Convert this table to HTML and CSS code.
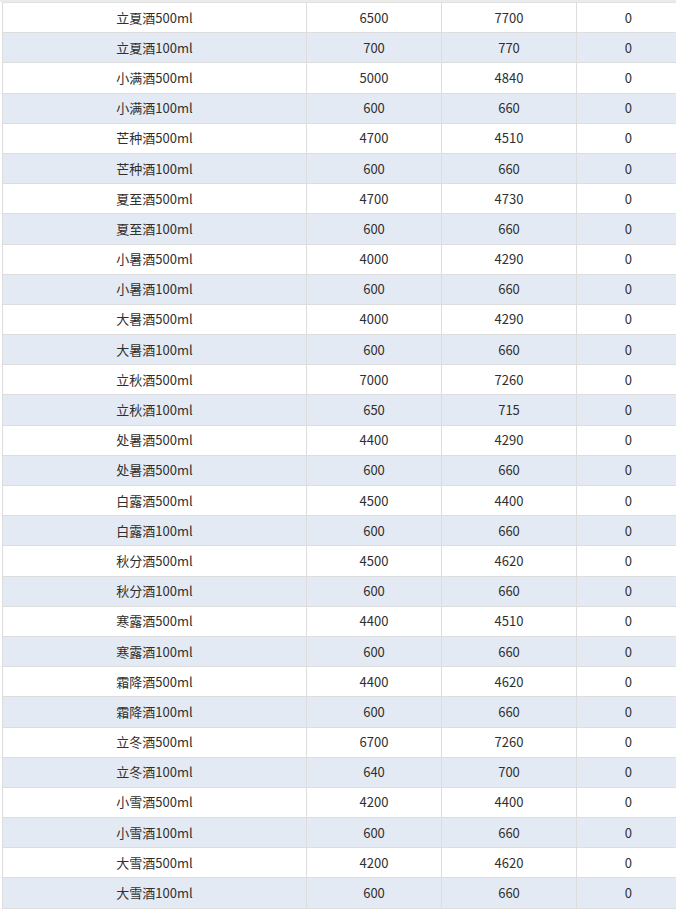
FILE: index.html
```html
<!DOCTYPE html>
<html lang="zh-CN">
<head>
<meta charset="utf-8">
<link rel="stylesheet" href="styles.css">
</head>
<body>
<div class="wrap">
<table class="grid">
<colgroup><col class="c1"><col class="c2"><col class="c3"><col class="c4"></colgroup>
<tbody>
<tr><td>立夏酒500ml</td><td>6500</td><td>7700</td><td>0</td></tr>
<tr><td>立夏酒100ml</td><td>700</td><td>770</td><td>0</td></tr>
<tr><td>小满酒500ml</td><td>5000</td><td>4840</td><td>0</td></tr>
<tr><td>小满酒100ml</td><td>600</td><td>660</td><td>0</td></tr>
<tr><td>芒种酒500ml</td><td>4700</td><td>4510</td><td>0</td></tr>
<tr><td>芒种酒100ml</td><td>600</td><td>660</td><td>0</td></tr>
<tr><td>夏至酒500ml</td><td>4700</td><td>4730</td><td>0</td></tr>
<tr><td>夏至酒100ml</td><td>600</td><td>660</td><td>0</td></tr>
<tr><td>小暑酒500ml</td><td>4000</td><td>4290</td><td>0</td></tr>
<tr><td>小暑酒100ml</td><td>600</td><td>660</td><td>0</td></tr>
<tr><td>大暑酒500ml</td><td>4000</td><td>4290</td><td>0</td></tr>
<tr><td>大暑酒100ml</td><td>600</td><td>660</td><td>0</td></tr>
<tr><td>立秋酒500ml</td><td>7000</td><td>7260</td><td>0</td></tr>
<tr><td>立秋酒100ml</td><td>650</td><td>715</td><td>0</td></tr>
<tr><td>处暑酒500ml</td><td>4400</td><td>4290</td><td>0</td></tr>
<tr><td>处暑酒500ml</td><td>600</td><td>660</td><td>0</td></tr>
<tr><td>白露酒500ml</td><td>4500</td><td>4400</td><td>0</td></tr>
<tr><td>白露酒100ml</td><td>600</td><td>660</td><td>0</td></tr>
<tr><td>秋分酒500ml</td><td>4500</td><td>4620</td><td>0</td></tr>
<tr><td>秋分酒100ml</td><td>600</td><td>660</td><td>0</td></tr>
<tr><td>寒露酒500ml</td><td>4400</td><td>4510</td><td>0</td></tr>
<tr><td>寒露酒100ml</td><td>600</td><td>660</td><td>0</td></tr>
<tr><td>霜降酒500ml</td><td>4400</td><td>4620</td><td>0</td></tr>
<tr><td>霜降酒100ml</td><td>600</td><td>660</td><td>0</td></tr>
<tr><td>立冬酒500ml</td><td>6700</td><td>7260</td><td>0</td></tr>
<tr><td>立冬酒100ml</td><td>640</td><td>700</td><td>0</td></tr>
<tr><td>小雪酒500ml</td><td>4200</td><td>4400</td><td>0</td></tr>
<tr><td>小雪酒100ml</td><td>600</td><td>660</td><td>0</td></tr>
<tr><td>大雪酒500ml</td><td>4200</td><td>4620</td><td>0</td></tr>
<tr><td>大雪酒100ml</td><td>600</td><td>660</td><td>0</td></tr>
</tbody>
</table>
</div>
</body>
</html>
```

FILE: styles.css
```css
html, body {
  margin: 0;
  padding: 0;
  background: #ffffff;
  overflow: hidden;
}
.wrap {
  padding: 0 0 0 2px;
  border-top: 2px solid #ebebeb;
  width: 700px;
}
.grid {
  border-collapse: collapse;
  table-layout: fixed;
  width: 677px;
  font-family: "Noto Sans CJK SC", "Microsoft YaHei", sans-serif;
  font-size: 13px;
  color: #2f2f2f;
}
.c1 { width: 304px; }
.c2 { width: 135px; }
.c3 { width: 135px; }
.c4 { width: 103px; }
.grid td {
  border: 1px solid #dddddd;
  height: 29.2px;
  padding: 0;
  text-align: center;
  vertical-align: middle;
  line-height: 16px;
}
.grid tr:first-child td {
  border-top-color: #e2e2e2;
}
.grid td:last-child {
  border-right: none;
}
.grid tr:nth-child(even) td {
  background: #e4eaf4;
}
```
